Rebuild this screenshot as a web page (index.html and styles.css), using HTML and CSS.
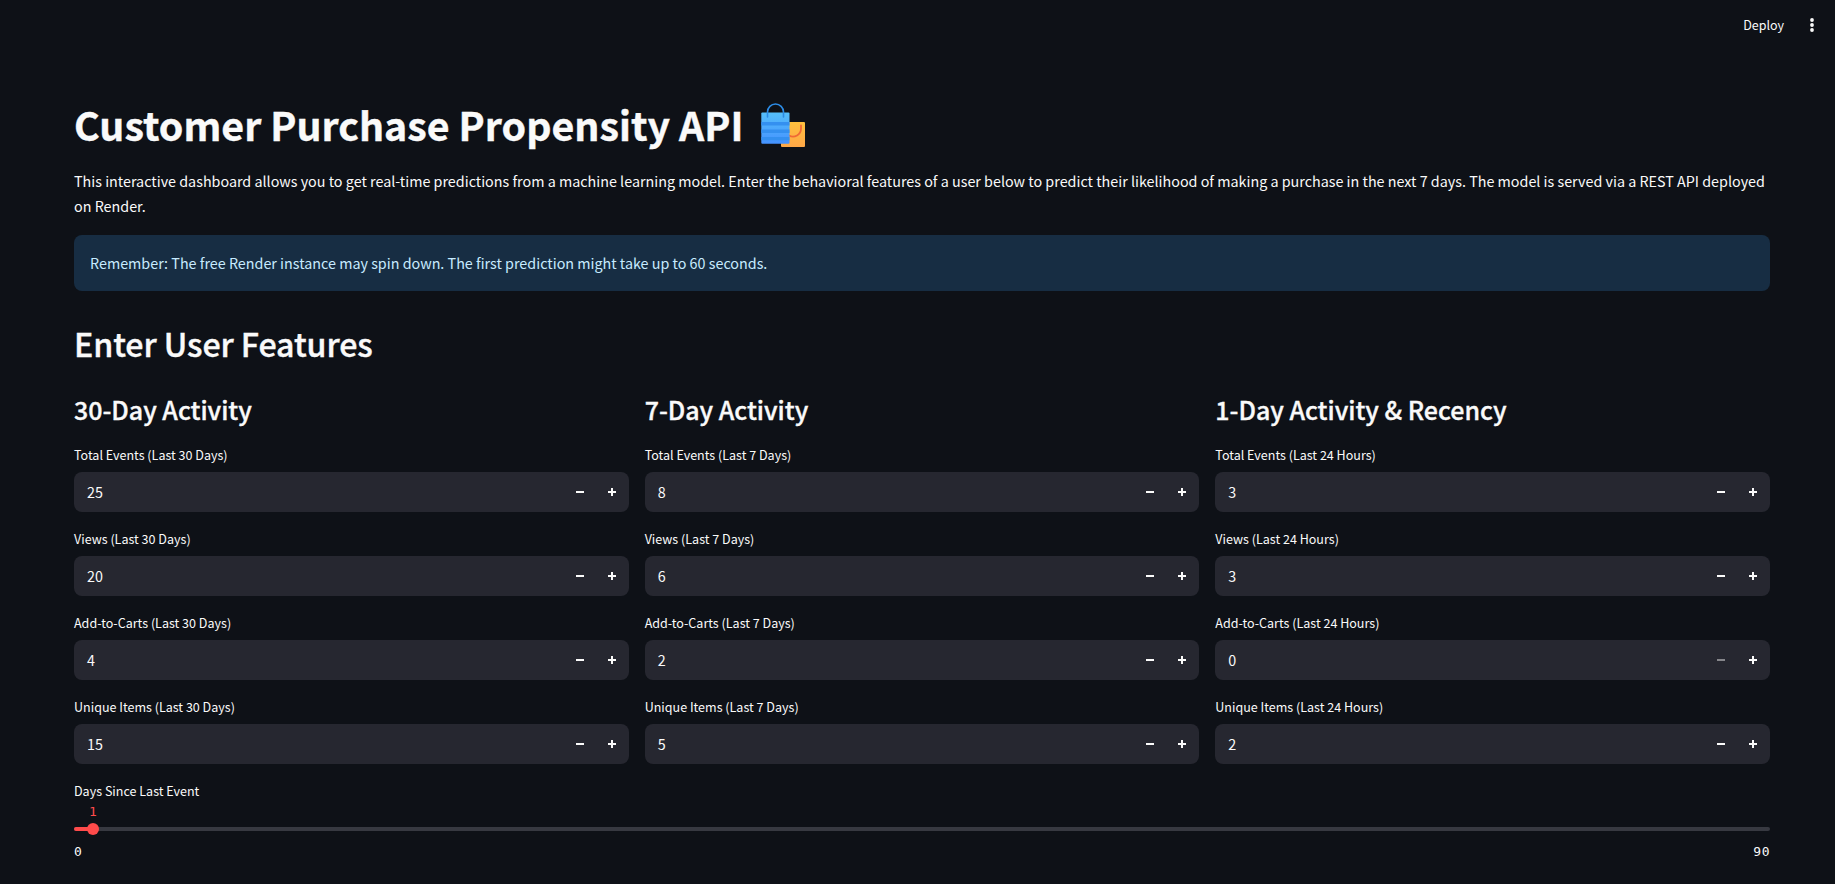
FILE: index.html
```html
<!DOCTYPE html>
<html lang="en">
<head>
<meta charset="utf-8">
<title>Customer Purchase Propensity API</title>
<link rel="stylesheet" href="styles.css">
</head>
<body>
<header class="toolbar">
  <span class="deploy">Deploy</span>
  <svg class="menu" width="6" height="16" viewBox="0 0 6 16"><circle cx="3" cy="3" r="1.9"/><circle cx="3" cy="8" r="1.9"/><circle cx="3" cy="13" r="1.9"/></svg>
</header>
<main class="content">
  <h1 class="title"><span>Customer Purchase Propensity API</span>
    <svg class="bags" width="44" height="44" viewBox="0 0 44 44">
      <defs>
        <linearGradient id="blue" x1="0" y1="0" x2="0" y2="1"><stop offset="0" stop-color="#56bffa"/><stop offset="1" stop-color="#4492ff"/></linearGradient>
        <linearGradient id="gold" x1="0" y1="0" x2="0" y2="1"><stop offset="0" stop-color="#ffc13e"/><stop offset="1" stop-color="#ffa747"/></linearGradient>
      </defs>
      <rect x="20" y="19" width="24" height="25" rx="1" fill="url(#gold)"/>
      <path d="M40 22.5v3a8 8 0 0 1-12 7" fill="none" stroke="#f06a35" stroke-width="1.8" stroke-linecap="round"/>
      <rect x="0.3" y="9.5" width="28.2" height="31.3" rx="1" fill="url(#blue)"/>
      <path d="M.3 19h28.2v3.6H.3zM.3 26.5h28.2v3.4H.3zM.3 34h28.2v3.2H.3z" fill="#3490f0"/>
      <path d="M6.5 14V9a8 8 0 0 1 16 0v5" fill="none" stroke="#2c8be4" stroke-width="1.6" stroke-linecap="round"/>
    </svg>
  </h1>
  <p class="intro">This interactive dashboard allows you to get real-time predictions from a machine learning model. Enter the behavioral features of a user below to predict their likelihood of making a purchase in the next 7 days. The model is served via a REST API deployed<br>on Render.</p>
  <div class="alert">Remember: The free Render instance may spin down. The first prediction might take up to 60 seconds.</div>
  <h2 class="section">Enter User Features</h2>
  <div class="columns" id="columns">
    <section class="column">
      <h3 class="subhead">30-Day Activity</h3>
      <div class="field"><label class="label">Total Events (Last 30 Days)</label><div class="input"><span class="value">25</span><i class="step minus"></i><i class="step plus"></i></div></div>
      <div class="field"><label class="label">Views (Last 30 Days)</label><div class="input"><span class="value">20</span><i class="step minus"></i><i class="step plus"></i></div></div>
      <div class="field"><label class="label">Add-to-Carts (Last 30 Days)</label><div class="input"><span class="value">4</span><i class="step minus"></i><i class="step plus"></i></div></div>
      <div class="field"><label class="label">Unique Items (Last 30 Days)</label><div class="input"><span class="value">15</span><i class="step minus"></i><i class="step plus"></i></div></div>
    </section>
    <section class="column">
      <h3 class="subhead">7-Day Activity</h3>
      <div class="field"><label class="label">Total Events (Last 7 Days)</label><div class="input"><span class="value">8</span><i class="step minus"></i><i class="step plus"></i></div></div>
      <div class="field"><label class="label">Views (Last 7 Days)</label><div class="input"><span class="value">6</span><i class="step minus"></i><i class="step plus"></i></div></div>
      <div class="field"><label class="label">Add-to-Carts (Last 7 Days)</label><div class="input"><span class="value">2</span><i class="step minus"></i><i class="step plus"></i></div></div>
      <div class="field"><label class="label">Unique Items (Last 7 Days)</label><div class="input"><span class="value">5</span><i class="step minus"></i><i class="step plus"></i></div></div>
    </section>
    <section class="column">
      <h3 class="subhead">1-Day Activity &amp; Recency</h3>
      <div class="field"><label class="label">Total Events (Last 24 Hours)</label><div class="input"><span class="value">3</span><i class="step minus"></i><i class="step plus"></i></div></div>
      <div class="field"><label class="label">Views (Last 24 Hours)</label><div class="input"><span class="value">3</span><i class="step minus"></i><i class="step plus"></i></div></div>
      <div class="field"><label class="label">Add-to-Carts (Last 24 Hours)</label><div class="input"><span class="value">0</span><i class="step minus disabled"></i><i class="step plus"></i></div></div>
      <div class="field"><label class="label">Unique Items (Last 24 Hours)</label><div class="input"><span class="value">2</span><i class="step minus"></i><i class="step plus"></i></div></div>
    </section>
  </div>
  <div class="slider">
    <label class="label">Days Since Last Event</label>
    <div class="track"><div class="fill"></div><div class="thumb"><span class="thumb-value">1</span></div></div>
    <div class="range"><span>0</span><span>90</span></div>
  </div>
</main>
</body>
</html>
```

FILE: styles.css
```css
* { box-sizing: border-box; }
body {
  margin: 0;
  height: 884px;
  overflow: hidden;
  background: #0e1117;
  color: #fafafa;
  font-family: "Noto Sans CJK JP", "Noto Sans CJK SC", sans-serif;
  font-size: 14.33px;
  line-height: 25px;
}
h1, h2, h3, p { margin: 0; }
.toolbar {
  height: 60px;
  padding: 0 20px 10px 0;
  display: flex;
  justify-content: flex-end;
  align-items: center;
  gap: 25px;
}
.deploy { font-size: 12.5px; line-height: 20px; }
.menu { fill: #fafafa; }
.content { padding: 37px 65px 0 74px; }
.title {
  display: flex;
  align-items: center;
  gap: 18px;
  height: 53px;
  font-size: 39.3px;
  font-weight: 700;
  line-height: 53px;
  letter-spacing: 0.02px;
  -webkit-text-stroke: 0.4px #fafafa;
}
.bags { margin-top: 2px; }
.intro { margin-top: 18px; white-space: nowrap; }
.alert {
  margin-top: 17px;
  height: 56px;
  padding: 15px 16px;
  border-radius: 8px;
  background: #172d43;
  color: #c7ebff;
}
.section {
  margin-top: 31px;
  font-size: 32.2px;
  font-weight: 500;
  line-height: 43px;
  letter-spacing: -0.08px;
  -webkit-text-stroke: 0.4px #fafafa;
}
.columns {
  margin-top: 27px;
  display: grid;
  grid-template-columns: repeat(3, 1fr);
  gap: 16px;
}
.subhead {
  font-size: 25px;
  font-weight: 500;
  line-height: 34px;
  letter-spacing: -0.02px;
  margin-bottom: 18px;
  -webkit-text-stroke: 0.35px #fafafa;
}
.field { height: 84px; }
.label { display: block; height: 28px; font-size: 12.54px; line-height: 22px; }
.input {
  height: 40px;
  padding: 0 1px 0 13px;
  display: flex;
  align-items: center;
  border-radius: 8px;
  background: #262730;
}
.value { flex: 1; padding-bottom: 2px; }
.step { width: 32px; height: 8px; background: linear-gradient(#fafafa, #fafafa) center / 8px 2px no-repeat; }
.plus {
  background:
    linear-gradient(#fafafa, #fafafa) center / 8px 2px no-repeat,
    linear-gradient(#fafafa, #fafafa) center / 2px 8px no-repeat;
}
.disabled { opacity: 0.45; }
.track {
  position: relative;
  height: 4px;
  margin-top: 19px;
  border-radius: 2px;
  background: #373941;
}
.fill { width: 1.111%; height: 4px; border-radius: 2px; background: #ff4b4b; }
.thumb {
  position: absolute;
  left: 13px;
  top: -4px;
  width: 12px;
  height: 12px;
  border-radius: 50%;
  background: #ff4b4b;
}
.thumb-value, .range { font-family: "DejaVu Sans Mono", monospace; font-size: 13px; line-height: 20px; letter-spacing: 0.5px; }
.thumb-value { position: absolute; left: 2px; top: -21px; color: #ff4b4b; }
.range { display: flex; justify-content: space-between; margin-top: 11px; }
```
